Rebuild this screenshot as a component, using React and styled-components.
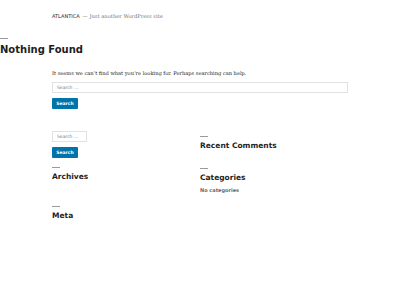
import styled, { createGlobalStyle } from 'styled-components';

const GlobalStyle = createGlobalStyle`
  html, body {
    margin: 0;
    padding: 0;
    background: #ffffff;
  }
  body {
    font-family: "DejaVu Sans", sans-serif;
    color: #1e1e1e;
  }
`;

const Page = styled.div`
  width: 400px;
  min-height: 300px;
  display: flex;
  flex-direction: column;
`;

const Header = styled.header`
  padding: 13px 0 0 52px;
  height: 12px;
  display: flex;
  align-items: baseline;
  gap: 3px;
`;

const SiteName = styled.span`
  font-family: "DejaVu Sans", sans-serif;
  font-size: 5px;
  color: #1e1e1e;
`;

const Tagline = styled.span`
  font-family: "DejaVu Serif", serif;
  font-size: 5.2px;
  color: #767676;
`;

const Rule = styled.div`
  width: 8px;
  height: 1px;
  background: #9a9a9a;
`;

const TitleBlock = styled.div`
  margin-top: 13px;
`;

const PageTitle = styled.h1`
  margin: 4px 0 0;
  font-family: "DejaVu Sans", sans-serif;
  font-weight: 700;
  font-size: 10px;
  line-height: 13px;
  color: #1e1e1e;
`;

const Content = styled.section`
  padding: 13px 52px 0;
  display: flex;
  flex-direction: column;
`;

const Text = styled.p`
  margin: 0;
  font-family: "DejaVu Serif", serif;
  font-size: 5.1px;
  line-height: 8px;
  color: #1e1e1e;
`;

const SearchForm = styled.form`
  display: flex;
  flex-direction: column;
  align-items: flex-start;
  gap: 5px;
  margin-top: ${p => p.$top || 0}px;
`;

const SearchInput = styled.input`
  box-sizing: border-box;
  width: ${p => p.$width}px;
  height: 11px;
  padding: 0 4px;
  border: 1px solid #e2e2e2;
  background: #ffffff;
  font-family: "DejaVu Sans", sans-serif;
  font-size: 4.5px;
  color: #555;
  outline: none;
  &::placeholder {
    color: #7a7a7a;
  }
`;

const SearchButton = styled.button`
  box-sizing: border-box;
  width: 26px;
  height: 11px;
  padding: 0;
  border: none;
  border-radius: 1px;
  background: #0073aa;
  color: #ffffff;
  font-family: "DejaVu Sans", sans-serif;
  font-weight: 700;
  font-size: 4.5px;
`;

const Widgets = styled.section`
  padding: 20px 52px 0;
  display: grid;
  grid-template-columns: 148px 148px;
  align-items: start;
`;

const Column = styled.div`
  display: flex;
  flex-direction: column;
`;

const Widget = styled.div`
  display: flex;
  flex-direction: column;
  margin-top: ${p => p.$top || 0}px;
`;

const WidgetTitle = styled.h2`
  margin: 4px 0 0;
  font-family: "DejaVu Sans", sans-serif;
  font-weight: 700;
  font-size: 7.5px;
  line-height: 10px;
  color: #1e1e1e;
`;

const WidgetText = styled.div`
  margin-top: 4px;
  font-family: "DejaVu Sans", sans-serif;
  font-weight: 700;
  font-size: 5px;
  line-height: 6px;
  color: #6b6b6b;
`;

export default function App() {
  return (
    <Page>
      <GlobalStyle />
      <Header>
        <SiteName>ATLANTICA</SiteName>
        <Tagline>— Just another WordPress site</Tagline>
      </Header>
      <TitleBlock>
        <Rule />
        <PageTitle>Nothing Found</PageTitle>
      </TitleBlock>
      <Content>
        <Text>It seems we can’t find what you’re looking for. Perhaps searching can help.</Text>
        <SearchForm $top={5}>
          <SearchInput $width={296} placeholder="Search …" />
          <SearchButton type="button">Search</SearchButton>
        </SearchForm>
      </Content>
      <Widgets>
        <Column>
          <SearchForm $top={2}>
            <SearchInput $width={35} placeholder="Search …" />
            <SearchButton type="button">Search</SearchButton>
          </SearchForm>
          <Widget $top={9}>
            <Rule />
            <WidgetTitle>Archives</WidgetTitle>
          </Widget>
          <Widget $top={24}>
            <Rule />
            <WidgetTitle>Meta</WidgetTitle>
          </Widget>
        </Column>
        <Column>
          <Widget $top={7}>
            <Rule />
            <WidgetTitle>Recent Comments</WidgetTitle>
          </Widget>
          <Widget $top={17}>
            <Rule />
            <WidgetTitle>Categories</WidgetTitle>
            <WidgetText>No categories</WidgetText>
          </Widget>
        </Column>
      </Widgets>
    </Page>
  );
}
